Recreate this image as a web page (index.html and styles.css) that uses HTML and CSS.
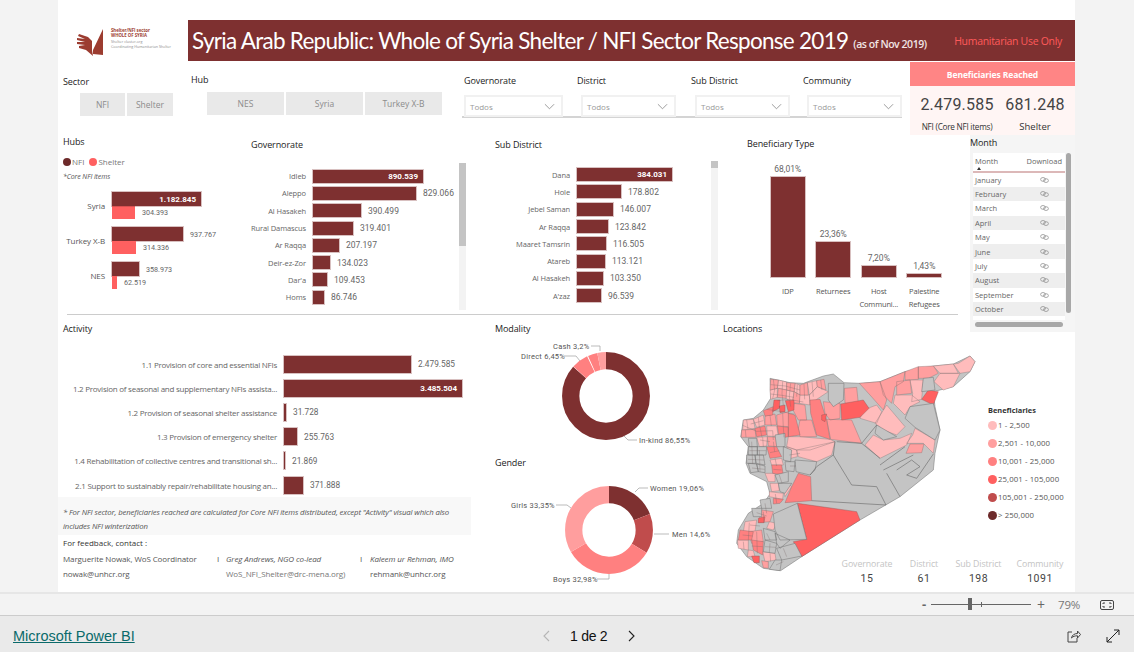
FILE: index.html
```html
<!DOCTYPE html>
<html lang="en">
<head>
  <meta charset="UTF-8">
  <title>Syria Shelter / NFI Sector Response 2019</title>
  <link rel="stylesheet" href="styles.css">
</head>
<body>

<svg class="defs" width="0" height="0">
  <symbol id="link" viewBox="0 0 9 6">
    <ellipse cx="3" cy="2.4" rx="2.4" ry="1.9"/>
    <ellipse cx="6" cy="3.6" rx="2.4" ry="1.9"/>
  </symbol>
  <symbol id="chev" viewBox="0 0 12 7">
    <path d="M1 1l5 5 5-5"/>
  </symbol>
</svg>

<div class="stage">
<main class="canvas">

  <!-- Header -->
  <header class="hdr">
    <div class="logo">
      <svg class="logo-mark" viewBox="0 0 36 28">
        <path class="hand" d="M17 22L27 1v26l-10-1z M16 22V13L12 9 3 6 2 8l7 3-8-1v2l8 2-8 0v2l8 1-6 1 0 2 7 2 7 6z"/>
      </svg>
      <div class="logo-text">
        <b>Shelter/NFI sector</b>
        <b>WHOLE OF SYRIA</b>
        <span>Shelter cluster.org</span>
        <span>Coordinating Humanitarian Shelter</span>
      </div>
    </div>
    <div class="banner">
      <span class="banner-title">Syria Arab Republic: Whole of Syria Shelter / NFI Sector Response 2019</span>
      <span class="banner-sub">(as of Nov 2019)</span>
      <span class="banner-use">Humanitarian Use Only</span>
    </div>
  </header>

  <!-- Filters -->
  <section class="filters">
    <div class="slicer sector">
      <div class="title">Sector</div>
      <div class="btns"><span class="btn w45">NFI</span><span class="btn w46">Shelter</span></div>
    </div>
    <div class="slicer hub">
      <div class="title">Hub</div>
      <div class="btns"><span class="btn w77">NES</span><span class="btn w77">Syria</span><span class="btn w77">Turkey X-B</span></div>
    </div>
    <div class="drops">
      <div class="drop first"><div class="title">Governorate</div><div class="dd">Todos<svg><use href="#chev"/></svg></div></div>
      <div class="drop"><div class="title">District</div><div class="dd">Todos<svg><use href="#chev"/></svg></div></div>
      <div class="drop"><div class="title">Sub District</div><div class="dd">Todos<svg><use href="#chev"/></svg></div></div>
      <div class="drop"><div class="title">Community</div><div class="dd">Todos<svg><use href="#chev"/></svg></div></div>
    </div>
    <div class="card">
      <div class="card-head">Beneficiaries Reached</div>
      <div class="card-body">
        <div class="card-col"><b>2.479.585</b><span>NFI (Core NFI items)</span></div>
        <div class="card-col"><b>681.248</b><span class="big">Shelter</span></div>
      </div>
    </div>
  </section>

  <!-- Middle charts -->
  <section class="mid">
    <div class="vis hubs">
      <div class="title">Hubs</div>
      <div class="legend-line"><i class="dot dark"></i>NFI<i class="dot red"></i>Shelter</div>
      <div class="core">*Core NFI items</div>
      <div class="hub-group">
        <div class="hub-name">Syria</div>
        <div class="hub-bars">
          <div class="bar" style="width:89px"><em>1.182.845</em></div>
          <div class="hub-row"><div class="bar red" style="width:23px"></div><span class="val">304.393</span></div>
        </div>
      </div>
      <div class="hub-group">
        <div class="hub-name">Turkey X-B</div>
        <div class="hub-bars">
          <div class="hub-row"><div class="bar" style="width:71px"></div><span class="val">937.767</span></div>
          <div class="hub-row"><div class="bar red" style="width:24px"></div><span class="val">314.336</span></div>
        </div>
      </div>
      <div class="hub-group">
        <div class="hub-name">NES</div>
        <div class="hub-bars">
          <div class="hub-row"><div class="bar" style="width:27px"></div><span class="val">358.973</span></div>
          <div class="hub-row"><div class="bar red" style="width:5px"></div><span class="val">62.519</span></div>
        </div>
      </div>
    </div>

    <div class="vis gov">
      <div class="title">Governorate</div>
      <div class="list">
        <div class="row"><span class="lbl">Idleb</span><div class="bar" style="width:110px"><em>890.539</em></div></div>
        <div class="row"><span class="lbl">Aleppo</span><div class="bar" style="width:103px"></div><span class="val">829.066</span></div>
        <div class="row"><span class="lbl">Al Hasakeh</span><div class="bar" style="width:48px"></div><span class="val">390.499</span></div>
        <div class="row"><span class="lbl">Rural Damascus</span><div class="bar" style="width:40px"></div><span class="val">319.401</span></div>
        <div class="row"><span class="lbl">Ar Raqqa</span><div class="bar" style="width:26px"></div><span class="val">207.197</span></div>
        <div class="row"><span class="lbl">Deir-ez-Zor</span><div class="bar" style="width:17px"></div><span class="val">134.023</span></div>
        <div class="row"><span class="lbl">Dar'a</span><div class="bar" style="width:14px"></div><span class="val">109.453</span></div>
        <div class="row"><span class="lbl">Homs</span><div class="bar" style="width:11px"></div><span class="val">86.746</span></div>
      </div>
      <div class="scroll gov-scroll"><div class="thumb"></div></div>
    </div>

    <div class="vis sub">
      <div class="title">Sub District</div>
      <div class="list">
        <div class="row"><span class="lbl">Dana</span><div class="bar" style="width:95px"><em>384.031</em></div></div>
        <div class="row"><span class="lbl">Hole</span><div class="bar" style="width:44px"></div><span class="val">178.802</span></div>
        <div class="row"><span class="lbl">Jebel Saman</span><div class="bar" style="width:36px"></div><span class="val">146.007</span></div>
        <div class="row"><span class="lbl">Ar Raqqa</span><div class="bar" style="width:31px"></div><span class="val">123.842</span></div>
        <div class="row"><span class="lbl">Maaret Tamsrin</span><div class="bar" style="width:29px"></div><span class="val">116.505</span></div>
        <div class="row"><span class="lbl">Atareb</span><div class="bar" style="width:28px"></div><span class="val">113.121</span></div>
        <div class="row"><span class="lbl">Al Hasakeh</span><div class="bar" style="width:26px"></div><span class="val">103.350</span></div>
        <div class="row"><span class="lbl">A'zaz</span><div class="bar" style="width:24px"></div><span class="val">96.539</span></div>
      </div>
      <div class="scroll sub-scroll"><div class="thumb"></div></div>
    </div>

    <div class="vis bene">
      <div class="title">Beneficiary Type</div>
      <div class="cols">
        <div class="col"><div class="plot"><span class="val">68,01%</span><div class="bar" style="height:100px"></div></div><div class="col-lbl">IDP</div></div>
        <div class="col"><div class="plot"><span class="val">23,36%</span><div class="bar" style="height:35px"></div></div><div class="col-lbl">Returnees</div></div>
        <div class="col"><div class="plot"><span class="val">7,20%</span><div class="bar" style="height:11px"></div></div><div class="col-lbl">Host Communi...</div></div>
        <div class="col"><div class="plot"><span class="val">1,43%</span><div class="bar" style="height:3px"></div></div><div class="col-lbl">Palestine Refugees</div></div>
      </div>
    </div>

    <div class="month">
      <div class="title">Month</div>
      <div class="month-body">
        <div class="table">
          <div class="thead"><span>Month</span><span>Download</span><i class="sort"></i></div>
          <div class="tr"><span>January</span><svg><use href="#link"/></svg></div>
          <div class="tr alt"><span>February</span><svg><use href="#link"/></svg></div>
          <div class="tr"><span>March</span><svg><use href="#link"/></svg></div>
          <div class="tr alt"><span>April</span><svg><use href="#link"/></svg></div>
          <div class="tr"><span>May</span><svg><use href="#link"/></svg></div>
          <div class="tr alt"><span>June</span><svg><use href="#link"/></svg></div>
          <div class="tr"><span>July</span><svg><use href="#link"/></svg></div>
          <div class="tr alt"><span>August</span><svg><use href="#link"/></svg></div>
          <div class="tr"><span>September</span><svg><use href="#link"/></svg></div>
          <div class="tr alt"><span>October</span><svg><use href="#link"/></svg></div>
          <div class="tr"><span>November</span><svg><use href="#link"/></svg></div>
        </div>
        <div class="vbar"></div>
      </div>
      <div class="hbar"></div>
    </div>
  </section>
  <hr class="rule">

  <!-- Bottom charts -->
  <section class="bottom">
    <div class="left">
      <div class="title">Activity</div>
      <div class="acts">
        <div class="act"><span class="lbl">1.1 Provision of core and essential NFIs</span><div class="bar" style="width:127px"></div><span class="val">2.479.585</span></div>
        <div class="act"><span class="lbl">1.2 Provision of seasonal and supplementary NFIs assista...</span><div class="bar" style="width:178px"><em>3.485.504</em></div></div>
        <div class="act"><span class="lbl">1.2 Provision of seasonal shelter assistance</span><div class="bar" style="width:2px"></div><span class="val">31.728</span></div>
        <div class="act"><span class="lbl">1.3 Provision of emergency shelter</span><div class="bar" style="width:13px"></div><span class="val">255.763</span></div>
        <div class="act"><span class="lbl">1.4 Rehabilitation of collective centres and transitional sh...</span><div class="bar" style="width:1px"></div><span class="val">21.869</span></div>
        <div class="act"><span class="lbl">2.1 Support to sustainably repair/rehabilitate housing an...</span><div class="bar" style="width:19px"></div><span class="val">371.888</span></div>
      </div>
      <p class="note">* For NFI sector, beneficiaries reached are calculated for Core NFI items distributed, except "Activity" visual which also includes NFI winterization</p>
      <div class="feedback">For feedback, contact :</div>
      <div class="contacts">
        <span>Marguerite Nowak, WoS Coordinator</span><span>I</span><i>Greg Andrews, NGO co-lead</i><span>I</span><i>Kaleem ur Rehman, IMO</i>
        <span>nowak@unhcr.org</span><span></span><span class="soft">WoS_NFI_Shelter@drc-mena.org)</span><span></span><span>rehmank@unhcr.org</span>
      </div>
    </div>

    <div class="donuts">
      <div class="title">Modality</div>
      <svg class="donut d1" viewBox="490 336 230 120">
        <g class="ring">
          <circle cx="606" cy="396" r="35.3" pathLength="100" stroke="#7e3030" stroke-dasharray="86.55 13.45"/>
          <circle cx="606" cy="396" r="35.3" pathLength="100" stroke="#ff8080" stroke-dasharray="6.2 93.8" stroke-dashoffset="-86.7"/>
          <circle cx="606" cy="396" r="35.3" pathLength="100" stroke="#ff8080" stroke-dasharray="3.5 96.5" stroke-dashoffset="-93.3"/>
          <circle cx="606" cy="396" r="35.3" pathLength="100" stroke="#ff9e9e" stroke-dasharray="3.2 96.8" stroke-dashoffset="-96.8"/>
        </g>
        <path class="leader" d="M591 346h9v5 M564 356h12l4 5 M624 436l4 4h9"/>
        <text x="553" y="349">Cash 3,2%</text>
        <text x="521" y="359">Direct 6,45%</text>
        <text x="639" y="443">In-kind 86,55%</text>
      </svg>
      <div class="title">Gender</div>
      <svg class="donut d2" viewBox="490 470 230 120">
        <g class="ring">
          <circle cx="609" cy="530" r="35.3" pathLength="100" stroke="#7e3030" stroke-dasharray="19.06 80.94"/>
          <circle cx="609" cy="530" r="35.3" pathLength="100" stroke="#c04c4c" stroke-dasharray="14.6 85.4" stroke-dashoffset="-19.06"/>
          <circle cx="609" cy="530" r="35.3" pathLength="100" stroke="#ff8080" stroke-dasharray="32.98 67.02" stroke-dashoffset="-33.66"/>
          <circle cx="609" cy="530" r="35.3" pathLength="100" stroke="#ff9e9e" stroke-dasharray="33.36 66.64" stroke-dashoffset="-66.64"/>
        </g>
        <path class="leader" d="M635 492l4-4h9 M654 534h15 M597 579h12v-5 M556 505h11l4 3"/>
        <text x="650" y="491">Women 19,06%</text>
        <text x="672" y="537">Men 14,6%</text>
        <text x="553" y="582">Boys 32,98%</text>
        <text x="511" y="508">Girls 33,35%</text>
      </svg>
    </div>

    <div class="loc">
      <div class="title loc-title">Locations</div>
      <svg class="map" viewBox="0 0 810 720">
        <path class="c0" d="M765,65 750,48 700,72 640,78 555,95 480,125 420,130 372,128 340,102 310,108 250,130 210,128 150,115 152,175 130,210 100,235 70,240 62,290 85,320 78,370 90,400 140,425 150,462 130,490 85,520 55,570 50,610 80,650 130,685 182,692 245,650 420,540 540,470 640,390 645,340 660,270 645,200 640,155 700,140 750,95Z"/>
        <!-- pale -->
        <path class="c1" d="M700,72 715,70 750,48 765,65 750,95 720,100Z M640,78 700,72 715,100 660,100Z M660,100 720,100 700,140 670,150 642,125Z M570,120 610,120 605,178 575,185 578,160Z M525,165 575,165 600,185 570,200 555,225 520,190Z M500,195 555,260 530,285 490,270 465,250Z M585,265 645,300 640,340 610,310 560,310 578,285Z M460,285 490,300 540,295 575,280 560,315 480,355 435,315Z M430,210 470,195 485,215 470,250 420,235Z M175,120 200,126 200,150 172,145Z M225,130 240,135 240,165 222,155Z M262,128 290,122 292,140 268,165Z M150,150 172,145 172,172 152,178Z M198,150 222,155 218,188 198,175Z M238,165 268,165 270,195 238,190Z M268,165 292,140 325,155 290,178 270,195Z M205,290 240,290 330,298 345,305 270,330 230,330 200,320Z M230,330 345,305 335,345 290,365 235,350Z M100,238 130,225 135,255 110,262Z M70,240 100,238 105,265 68,270Z M140,258 170,258 175,290 142,288Z M110,292 142,290 140,318 118,320Z M150,360 185,355 190,375 155,375Z M135,400 165,400 165,425 145,425Z M200,320 230,330 232,350 212,355Z M150,430 175,430 178,452 155,455Z M148,455 190,460 188,478 148,470Z M205,432 215,440 195,470 192,458Z M148,545 170,550 160,570 140,565Z M75,545 110,540 105,575 70,575Z M52,600 85,600 85,630 55,625Z M85,630 100,632 105,650 82,650Z M128,635 165,640 168,660 135,665Z"/>
        <!-- light -->
        <path class="c2" d="M595,80 640,78 655,100 625,115 595,115Z M555,95 595,80 595,118 555,120Z M480,125 555,95 550,125 525,140 515,190 490,165Z M530,125 570,120 575,160 530,165Z M570,312 612,312 605,338 558,340Z M418,130 480,125 500,180 490,210 450,165Z M373,145 410,142 415,190 375,190Z M152,118 175,120 172,145 150,150Z M200,128 225,130 222,155 200,150Z M240,135 262,128 265,165 240,165Z M175,145 200,150 198,175 172,172Z M222,155 240,165 238,190 218,188Z M290,122 312,118 318,150 292,140Z M222,190 255,195 260,240 235,240 220,212Z M310,185 360,190 360,235 330,240 315,220Z M320,238 395,240 425,310 332,298Z M240,240 275,240 290,290 240,290 235,265Z M135,228 165,222 170,255 135,255Z M170,225 205,215 208,260 172,258Z M65,270 105,268 108,292 64,292Z M142,290 175,292 178,320 145,318Z M125,510 160,515 150,545 115,548Z M85,575 125,570 130,605 95,610Z M125,662 145,665 145,685 130,683Z"/>
        <!-- mid -->
        <path class="c3" d="M235,400 272,410 275,482 195,488 215,440Z M270,180 300,178 320,240 330,298 290,285 272,220Z M205,220 225,225 240,285 205,290Z M130,212 160,200 158,225 135,228Z M105,265 135,258 140,285 110,290Z M172,258 205,262 205,290 178,295Z M140,320 170,320 185,350 150,355Z M155,375 185,375 190,405 158,400Z M160,475 190,478 180,490 160,492Z M60,570 100,575 95,600 55,600Z M95,600 130,605 128,645 100,630Z"/>
        <!-- red -->
        <path class="c4" d="M232,490 410,515 420,540 245,650 220,605 260,598Z M625,150 655,155 640,195 605,178Z M362,192 430,180 447,205 420,232 365,240Z M162,180 180,180 178,205 158,215Z M196,182 222,180 222,210 205,215Z M178,198 195,195 195,215 180,218Z M305,225 320,222 315,245 305,240Z M115,535 135,530 132,548 115,548Z M95,648 118,648 118,668 102,668Z"/>
        <!-- grey districts and desert boundaries -->
        <path class="c0" d="M610,115 640,112 645,150 605,155Z M325,130 372,130 370,180 340,200 325,180Z M570,200 640,190 660,270 645,300 585,262 555,235Z M470,255 530,290 490,300 465,280Z M85,295 110,295 112,320 88,320Z M85,320 112,320 112,345 85,345Z M112,320 140,320 138,345 112,345Z M80,345 105,345 108,370 80,370Z M105,345 130,345 135,375 108,370Z M85,370 110,372 115,395 92,398Z M110,372 135,378 135,398 115,395Z M165,285 195,280 195,320 170,320Z M190,320 215,330 212,365 190,360Z M195,365 225,365 222,395 198,392Z M225,360 290,365 285,390 270,405 228,395Z M165,405 205,395 205,425 175,430Z M175,430 215,430 195,460 180,455Z M120,480 150,475 155,505 125,505Z M95,505 125,505 125,530 100,530Z M160,522 232,490 260,598 180,600 165,570Z M130,565 165,575 170,600 135,600Z M165,580 210,600 180,625 170,610Z M135,600 170,610 165,640 130,635Z M170,625 225,610 245,648 185,660Z M165,660 185,660 180,692 148,688Z"/>
        <path class="lines" d="M345,305 340,345 395,435 470,440 498,495 M270,405 290,380 340,345 M425,310 470,255 M425,310 480,355 M480,375 555,320 M490,390 580,345 M500,400 540,470 M530,390 575,360 600,380 560,405 590,415 640,342 M275,482 498,495 M350,305 425,310"/>
        <!-- small district boundaries in the west -->
        <path class="fine" d="M160,118 164,150 158,176 M188,124 186,160 190,196 M212,130 208,168 212,200 M232,134 230,170 M252,132 254,178 M276,126 280,170 M302,120 306,150 M152,134 196,138 240,150 M152,162 186,166 222,172 M172,182 208,178 250,186 M140,208 180,214 222,222 M115,232 118,262 M150,226 154,258 M188,220 190,262 M80,240 84,268 M92,252 130,242 M68,256 110,274 158,272 M120,262 126,292 M158,272 160,300 M190,262 192,292 M76,270 78,292 M120,300 150,305 M128,292 130,320 M160,305 164,335 M150,338 178,332 M165,355 170,378 M95,305 98,372 M118,330 120,395 M88,332 138,332 M84,358 132,360 M96,384 134,388 M208,345 240,340 M210,378 228,378 M160,388 185,390 M178,405 186,430 M166,462 170,490 M135,490 140,520 M110,518 140,528 M130,515 132,548 M90,555 120,558 M88,548 85,600 M68,585 98,588 M110,575 112,640 M95,618 128,620 M70,605 72,628 M140,580 150,600 M150,610 148,638 M135,620 168,622 M150,640 152,665 M190,625 200,650 M168,675 190,665"/>
      </svg>
      <div class="map-legend">
        <b>Beneficiaries</b>
        <div class="li"><i class="dot s1"></i>1 - 2,500</div>
        <div class="li"><i class="dot s2"></i>2,501 - 10,000</div>
        <div class="li"><i class="dot s3"></i>10,001 - 25,000</div>
        <div class="li"><i class="dot s4"></i>25,001 - 105,000</div>
        <div class="li"><i class="dot s5"></i>105,001 - 250,000</div>
        <div class="li"><i class="dot s6"></i>&gt; 250,000</div>
      </div>
      <div class="kpis">
        <div class="kpi k1"><span>Governorate</span><b>15</b></div>
        <div class="kpi k2"><span>District</span><b>61</b></div>
        <div class="kpi k3"><span>Sub District</span><b>198</b></div>
        <div class="kpi k4"><span>Community</span><b>1091</b></div>
      </div>
    </div>
  </section>
</main>
</div>

<!-- Viewer chrome -->
<div class="zoombar">
  <span class="z-minus">-</span>
  <div class="slider"><i class="handle"></i><i class="tick"></i></div>
  <span class="z-plus">+</span>
  <span class="z-pct">79%</span>
  <svg class="ico fit" viewBox="0 0 14 10"><rect x=".5" y=".5" width="13" height="9" rx="1.5"/><path d="M3 4V3h2 M9 3h2v1 M11 6v1H9 M5 7H3V6"/></svg>
</div>
<footer class="foot">
  <a class="brand" href="#">Microsoft Power BI</a>
  <div class="pager">
    <svg class="pg off" viewBox="0 0 7 12"><path d="M6 1L1 6l5 5"/></svg>
    <span>1 de 2</span>
    <svg class="pg" viewBox="0 0 7 12"><path d="M1 1l5 5-5 5"/></svg>
  </div>
  <svg class="ico share" viewBox="0 0 14 14"><path d="M5 3H1v10h9V9"/><path d="M4.5 9c.5-3 3-4.500 6-4.500V2L13.500 5.500 10.500 9V6.800c-2.500 0-4.500.5-6 2.200z"/></svg>
  <svg class="ico expand" viewBox="0 0 14 14"><path d="M1 13L13 1M8 1h5v5M1 8v5h5"/></svg>
</footer>

</body>
</html>
```

FILE: styles.css
```css
* { box-sizing: border-box; }
body { margin: 0; background: #eaeaea; font-family: "Open Sans", sans-serif; color: #333; overflow: hidden; }
.defs { position: absolute; }

.stage { height: 592px; padding-left: 58px; padding-right: 59px; background: #f3f3f3; }
.canvas { width: 1017px; height: 592px; background: #fff; }
.title { font-size: 9px; line-height: 14px; color: #222; letter-spacing: -.1px; white-space: nowrap; }

/* header */
.hdr { display: flex; height: 62px; padding-top: 20px; }
.logo { flex: none; width: 130px; display: flex; padding: 8px 0 0 18px; overflow: hidden; }
.logo-mark { width: 36px; height: 28px; flex: none; }
.hand { fill: #9c3c30; }
.logo-text { display: flex; flex-direction: column; font-size: 3.700px; line-height: 5.400px; color: #8a8a8a; margin-left: -1px; white-space: nowrap; }
.logo-text b { color: #9c3c30; font-size: 4.300px; }
.banner { flex: none; width: 887px; height: 41px; background: #7e3030; color: #fff; display: flex; align-items: center; padding-left: 4px; padding-right: 13px; white-space: nowrap; }
.banner-title { font-family: Lato, sans-serif; font-size: 22.500px; letter-spacing: -.72px; }
.banner-sub { font-size: 10.500px; font-weight: 600; letter-spacing: -.45px; margin-left: 5px; margin-top: 6px; color: #f1e4e4; }
.banner-use { margin-left: auto; font-size: 10.500px; color: #ff5a5a; letter-spacing: -.3px; }

/* filters */
.filters { display: flex; height: 73px; }
.slicer .title { margin-top: 13px; }
.sector { width: 130px; padding-left: 5px; }
.hub { width: 274px; padding-left: 3px; }
.sector .btns { margin: 4px 0 0 17px; }
.hub .title { margin-top: 11px; }
.hub .btns { margin: 5px 0 0 16px; }
.btns { display: flex; gap: 2px; }
.btn { height: 23px; background: #e9e9e9; color: #8c8c8c; font-size: 8.500px; display: flex; align-items: center; justify-content: center; }
.w45 { width: 45px; }
.w46 { width: 46px; }
.w77 { width: 77px; }
.drops { width: 440px; height: 56px; border-bottom: 2px solid #d4d4d4; display: grid; grid-template-columns: 115px 114px 112px 99px; padding-top: 12px; }
.drop { padding-left: 0; }
.drop.first { padding-left: 2px; }
.drop + .drop .dd { margin-left: 4px; }
.dd { width: 95px; height: 22px; margin-top: 7px; border: 2px solid #f1f1f1; color: #999; font-size: 8px; display: flex; align-items: center; justify-content: space-between; padding: 0 6px 0 4px; }
.first .dd { width: 99px; }
.dd svg { width: 11px; height: 7px; fill: none; stroke: #888; stroke-width: .9; }
.card { width: 165px; height: 73px; margin-left: 8px; background: #fff5f4; }
.card-head { height: 24px; background: #ff8585; color: #fff; font-size: 8.500px; font-weight: 700; display: flex; align-items: center; justify-content: center; letter-spacing: -.1px; }
.card-body { display: flex; }
.card-col { display: flex; flex-direction: column; align-items: center; color: #333; }
.card-col:first-child { width: 94px; }
.card-col:last-child { width: 62px; }
.card-col b { font-family: Roboto, sans-serif; font-weight: 400; font-size: 16px; line-height: 24px; margin-top: 7px; letter-spacing: .2px; color: #444; white-space: nowrap; }
.card-col span { font-size: 8.200px; line-height: 14px; margin-top: 3px; letter-spacing: -.25px; white-space: nowrap; }
.card-col .big { font-size: 9.500px; letter-spacing: 0; }

/* shared bars */
.bar { background: #7e3030; height: 13px; outline: 1px solid rgba(126, 48, 48, .3); outline-offset: -.5px; display: flex; align-items: center; justify-content: flex-end; flex: none; }
.bar.red { background: #ff6060; outline: 0; }
.bar em { font-family: Roboto, sans-serif; font-style: normal; font-weight: 700; color: #fff; font-size: 8px; padding-right: 5px; white-space: nowrap; }
.val { font-family: Roboto, sans-serif; font-size: 8.500px; color: #666; white-space: nowrap; }
.lbl { font-size: 7.500px; color: #666; letter-spacing: -.1px; text-align: right; white-space: nowrap; }

/* middle row */
.mid { display: flex; height: 179px; align-items: flex-start; }
.vis { flex: none; height: 179px; position: relative; }
.hubs { width: 188px; padding-left: 5px; }
.legend-line { font-size: 8px; color: #777; display: flex; align-items: center; margin-top: 7px; line-height: 12px; }
.dot { display: inline-block; width: 8px; height: 8px; border-radius: 50%; margin-right: 1px; flex: none; }
.dot.dark { background: #6d2a2a; }
.dot.red { background: #ff6060; margin-left: 5px; }
.core { font-size: 7px; font-style: italic; color: #555; line-height: 12px; margin-top: 3px; letter-spacing: -.1px; }
.hub-group { display: flex; align-items: center; margin-bottom: 8px; }
.core + .hub-group { margin-top: 9px; }
.hub-name { width: 42px; margin-right: 7px; text-align: right; font-size: 8px; color: #555; letter-spacing: -.1px; white-space: nowrap; }
.hub-bars .bar { height: 14px; }
.hub-row { display: flex; align-items: center; gap: 7px; }
.hub-bars .bar.red { height: 13px; }
.hub-bars .val { font-size: 7.200px; }
.gov { width: 244px; padding-left: 5px; padding-top: 3px; }
.sub { width: 252px; padding-left: 5px; padding-top: 3px; }
.list { margin-top: 15.500px; }
.sub .list { margin-top: 14px; }
.gov .lbl { width: 55px; }
.sub .lbl { width: 75px; }
.row { display: flex; align-items: center; height: 17.300px; gap: 7px; }
.scroll { position: absolute; width: 7px; background: #f3f3f3; top: 28px; height: 147px; }
.gov-scroll { left: 213px; }
.sub-scroll { left: 221px; top: 26px; height: 149px; }
.thumb { background: #c4c4c4; }
.gov-scroll .thumb { height: 83px; }
.sub-scroll .thumb { height: 7px; }
.bene { width: 228px; padding-left: 5px; padding-top: 2px; }
.cols { display: flex; margin-left: 18px; }
.col { width: 45.500px; display: flex; flex-direction: column; align-items: center; }
.plot { height: 126px; display: flex; flex-direction: column; justify-content: flex-end; align-items: center; gap: 3px; }
.plot .bar { width: 34px; }
.plot .val { font-size: 8.500px; }
.col-lbl { font-size: 7.500px; line-height: 12.500px; color: #555; text-align: center; margin-top: 8px; letter-spacing: -.15px; }

/* month table */
.month { flex: none; width: 105px; height: 197px; background: #f5f5f5; position: relative; z-index: 1; padding-top: 1px; }
.month .title { line-height: 14px; }
.month-body { display: flex; margin: 3px 0 0 3px; height: 167px; }
.table { width: 92px; background: #fff; overflow: hidden; font-size: 7.500px; color: #666; }
.thead { height: 19.500px; display: flex; justify-content: space-between; padding: 3px 3px 0 2px; border-bottom: 2px solid #dcb8b8; position: relative; line-height: 10px; }
.sort { position: absolute; left: 4px; bottom: 1px; border: 2.500px solid transparent; border-top: 0; border-bottom: 3px solid #333; }
.tr { height: 14.400px; display: flex; align-items: center; padding-left: 2px; }
.tr span { width: 65px; }
.tr svg { width: 9px; height: 6px; fill: none; stroke: #888; stroke-width: .7; }
.tr.alt { background: #eee; }
.vbar { width: 5px; margin-left: 1px; background: #a8a8a8; border-radius: 3px; height: 160px; }
.hbar { width: 88px; height: 5px; margin: 2px 0 0 5px; border-radius: 3px; background: #a8a8a8; }
.rule { margin: 0 0 0 9px; width: 891px; height: 1px; border: 0; background: #ccc; }

/* bottom row */
.bottom { display: flex; height: 277px; }
.left { width: 432px; padding-top: 7px; }
.left > .title, .feedback { padding-left: 5px; }
.acts { margin-top: 16px; }
.act { display: flex; align-items: center; height: 24.200px; gap: 7px; }
.act .lbl { width: 219px; font-size: 8px; letter-spacing: -.25px; }
.act .bar { height: 17px; }
.act .val { font-size: 8.300px; }
.note { width: 413px; height: 38px; margin: 0; padding: 8px 20px 0 5px; background: #f8f8f8; font-size: 7.750px; line-height: 14px; font-style: italic; color: #555; letter-spacing: -.12px; }
.feedback { font-size: 8px; line-height: 16px; color: #333; }
.contacts { display: grid; grid-template-columns: 154px 9px 134px 10px auto; padding-left: 5px; font-size: 8px; line-height: 15px; color: #555; white-space: nowrap; letter-spacing: -.1px; }
.contacts .soft { color: #777; }
.donuts { width: 230px; padding-top: 7px; }
.donuts .title { padding-left: 5px; }
.donut { display: block; width: 230px; height: 120px; }
.ring circle { fill: none; stroke-width: 17.300; transform: rotate(-90deg); transform-box: fill-box; transform-origin: center; }
.leader { fill: none; stroke: #aaa; stroke-width: .8; }
.donut text { font-family: Roboto, sans-serif; font-size: 7.500px; fill: #555; letter-spacing: .25px; }
.d1 { margin-bottom: 0; }
.loc { flex: none; width: 355px; display: grid; grid-template-columns: 268px 87px; grid-template-rows: 25px 215px 30px; }
.loc-title { grid-column: 1 / 3; padding: 7px 0 0 3px; }
.map { grid-column: 1; grid-row: 2 / 4; width: 270px; height: 240px; }
.c0 { fill: #c4c4c4; stroke: #707070; stroke-width: 1.500; stroke-linejoin: round; }
.c1 { fill: #ffbcbc; stroke: #8a7878; stroke-width: 1.200; }
.c2 { fill: #ff9f9f; stroke: #8a7070; stroke-width: 1.200; }
.c3 { fill: #ff8080; stroke: #8a6868; stroke-width: 1.200; }
.c4 { fill: #ff6060; stroke: #8a5858; stroke-width: 1.200; }
.lines { fill: none; stroke: #666; stroke-width: 1.800; }
.fine { fill: none; stroke: #7a6a6a; stroke-width: 1; }
.map-legend { grid-column: 2; grid-row: 2; padding-top: 64px; font-size: 7.800px; color: #555; }
.map-legend b { display: block; font-size: 7.400px; line-height: 12px; color: #333; }
.li { display: flex; align-items: center; height: 18px; margin-top: 0; letter-spacing: .1px; white-space: nowrap; }
.map-legend .dot { width: 9px; height: 9px; margin-right: 1px; }
.s1 { background: #ffbcbc; }
.s2 { background: #ff9f9f; }
.s3 { background: #ff8080; }
.s4 { background: #ff6060; }
.s5 { background: #c04c4c; }
.s6 { background: #6d2a2a; }
.kpis { grid-column: 1 / 3; grid-row: 3; justify-self: end; display: flex; z-index: 1; padding-top: 2px; }
.kpi { display: flex; flex-direction: column; align-items: center; }
.k1 { width: 58px; }
.k2 { width: 56px; }
.k3 { width: 53px; }
.k4 { width: 70px; }
.kpi span { font-size: 8.800px; line-height: 14px; color: #c4c4c4; white-space: nowrap; letter-spacing: -.1px; }
.kpi b { font-family: Roboto, sans-serif; font-weight: 400; font-size: 10.500px; line-height: 16px; color: #444; letter-spacing: .5px; }

/* viewer chrome */
.zoombar { height: 24px; background: #f3f3f3; border-top: 2px solid #e6e6e6; border-bottom: 1px solid #ccc; display: flex; align-items: center; color: #666; padding-left: 922px; }
.z-minus { width: 9px; font-size: 13px; font-weight: 700; line-height: 1; }
.slider { width: 100px; height: 1px; background: #666; position: relative; }
.handle { position: absolute; left: 37px; top: -6px; width: 4px; height: 12px; background: #666; }
.tick { position: absolute; left: 50px; top: -2px; width: 1px; height: 5px; background: #666; }
.z-plus { width: 21px; font-size: 14px; padding-left: 6px; line-height: 1; }
.z-pct { width: 48px; padding-left: 6px; font-size: 11.500px; color: #777; letter-spacing: -.2px; }
.ico { fill: none; stroke: #444; stroke-width: 1; }
.fit { width: 14px; height: 10px; }
.foot { height: 36px; display: flex; align-items: center; padding: 3px 0 0 13px; }
.brand { font-family: "Liberation Sans", sans-serif; font-size: 14.500px; color: #0b6a6a; text-decoration: underline; }
.pager { margin-left: 408px; width: 92px; display: flex; align-items: center; justify-content: space-between; font-family: "Liberation Sans", sans-serif; font-size: 14px; color: #111; letter-spacing: -.3px; }
.pg { width: 7px; height: 12px; fill: none; stroke: #222; stroke-width: 1.100; }
.pg.off { stroke: #b5b5b5; }
.share { width: 14px; height: 14px; margin-left: 432px; }
.expand { width: 14px; height: 14px; margin-left: 25px; stroke: #222; }
```
